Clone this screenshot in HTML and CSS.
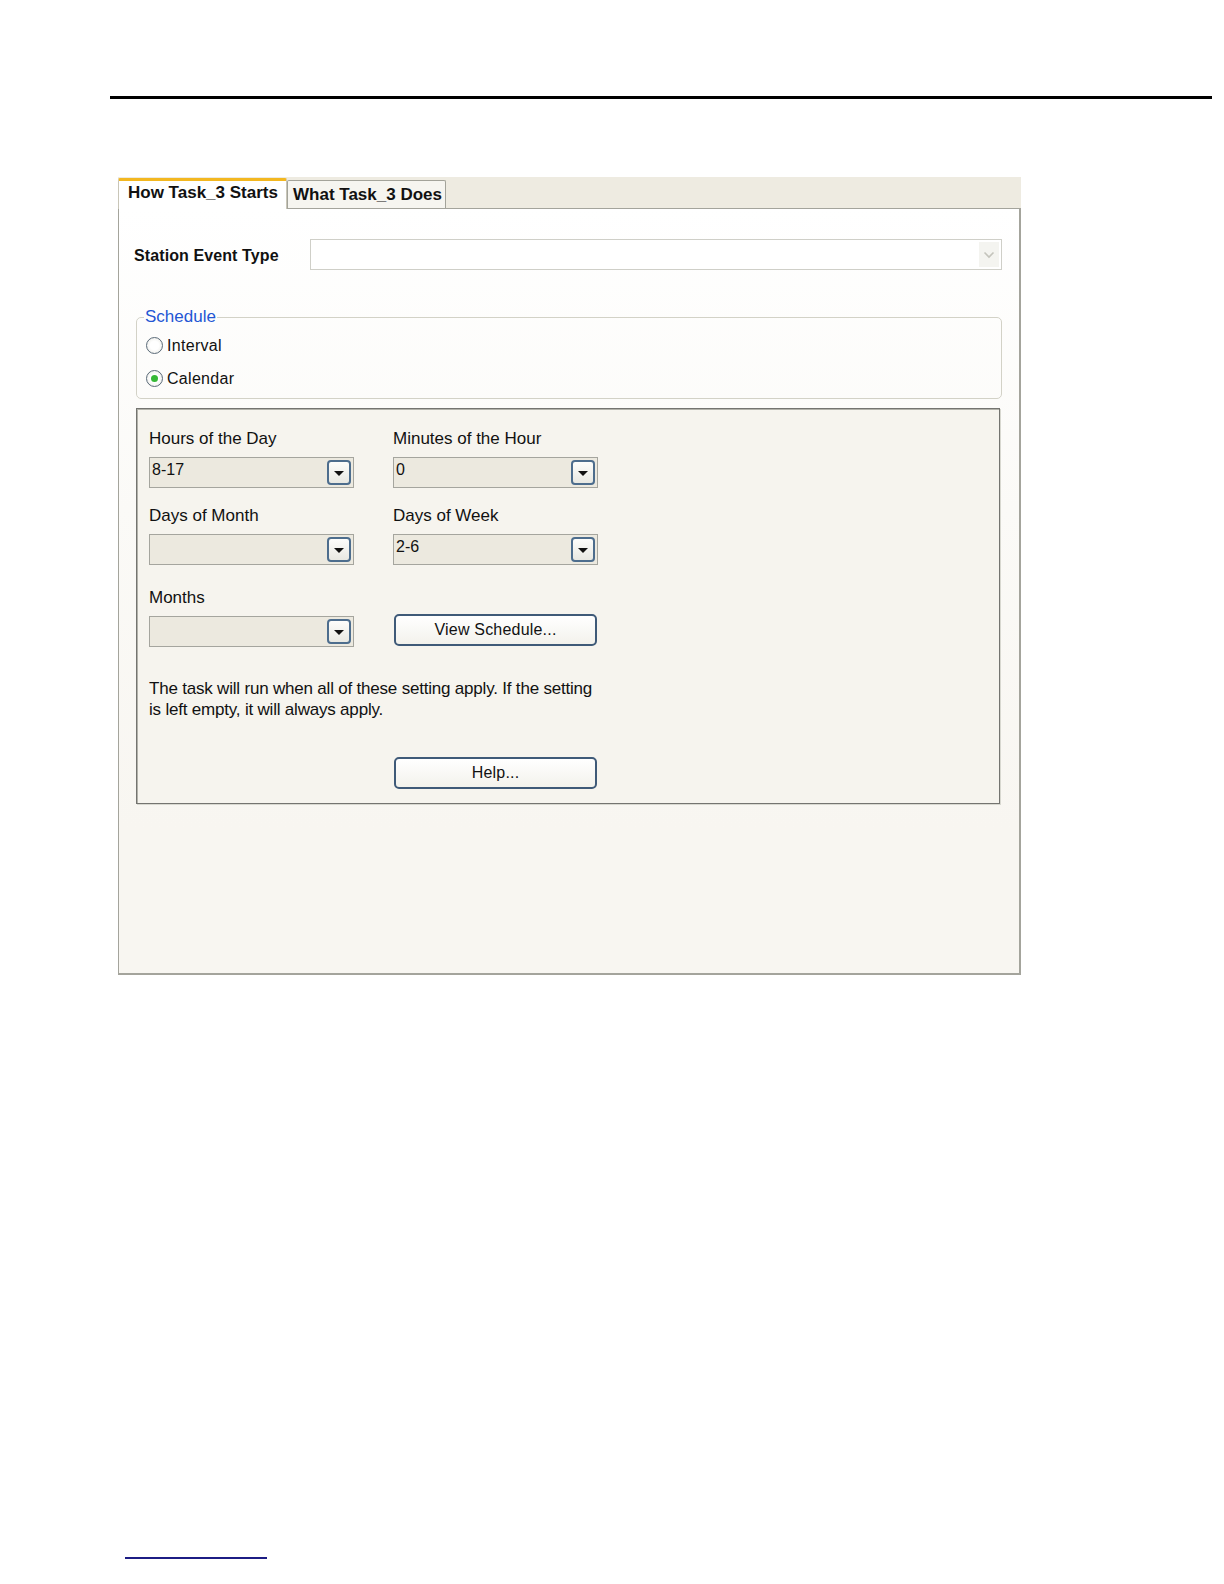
FILE: index.html
```html
<!DOCTYPE html>
<html lang="en">
<head>
  <meta charset="UTF-8" />
  <title>Task_3 Schedule</title>
  <link rel="stylesheet" href="styles.css">
</head>
<body>
  <div class="rule-top"></div>

  <div class="window">
    <div class="tabs">
      <div class="tab active">How Task_3 Starts</div>
      <div class="tab">What Task_3 Does</div>
    </div>

    <div class="panel">
      <div class="event-row">
        <span class="event-label">Station Event Type</span>
        <div class="event-select">
          <span class="event-arrow">
            <svg width="12" height="8" viewBox="0 0 12 8"><path d="M1.5 1.5 L6 6 L10.5 1.5" fill="none" stroke="#c4c4bc" stroke-width="1.6"/></svg>
          </span>
        </div>
      </div>

      <fieldset class="schedule">
        <legend>Schedule</legend>
        <label class="radio"><span class="dot"></span>Interval</label>
        <label class="radio checked"><span class="dot"></span>Calendar</label>
      </fieldset>

      <div class="calendar">
        <div class="cal-grid">
          <div class="field">
            <div class="field-label">Hours of the Day</div>
            <div class="combo"><span class="combo-val">8-17</span><span class="combo-btn"></span></div>
          </div>
          <div class="field">
            <div class="field-label">Minutes of the Hour</div>
            <div class="combo"><span class="combo-val">0</span><span class="combo-btn"></span></div>
          </div>
          <div class="field">
            <div class="field-label">Days of Month</div>
            <div class="combo"><span class="combo-val"></span><span class="combo-btn"></span></div>
          </div>
          <div class="field">
            <div class="field-label">Days of Week</div>
            <div class="combo"><span class="combo-val">2-6</span><span class="combo-btn"></span></div>
          </div>
          <div class="field months">
            <div class="field-label">Months</div>
            <div class="combo"><span class="combo-val"></span><span class="combo-btn"></span></div>
          </div>
          <div class="field months button-cell">
            <button class="btn">View Schedule...</button>
          </div>
        </div>

        <p class="note">The task will run when all of these setting apply. If the setting is left empty, it will always apply.</p>

        <div class="help-row">
          <button class="btn">Help...</button>
        </div>
      </div>
    </div>
  </div>

  <div class="rule-foot"></div>
</body>
</html>
```

FILE: styles.css
```css
html, body {
  margin: 0;
  background: #fff;
}
body {
  font-family: "Liberation Sans", Arial, sans-serif;
  color: #111;
  padding-top: 96px;
}
.rule-top {
  height: 3px;
  background: #000;
  margin: 0 12px 0 110px;
}
.window {
  margin: 78px 0 0 118px;
  width: 903px;
}
.tabs {
  display: flex;
  align-items: flex-end;
  height: 31px;
  background: #eeebe1;
}
.tab {
  box-sizing: border-box;
  height: 28px;
  width: 159px;
  padding: 4px 0 0 5px;
  border: 1px solid #a3a39a;
  border-bottom: none;
  background: #f6f5f0;
  font-weight: bold;
  font-size: 17px;
  border-radius: 2px 2px 0 0;
}
.tab.active {
  height: 31px;
  width: 169px;
  padding: 2px 0 0 9px;
  border: 1px solid #c9c6b8;
  border-top: 3px solid #f3b720;
  border-bottom: none;
  background: #fff;
  margin-bottom: -1px;
  position: relative;
}
.panel {
  box-sizing: border-box;
  height: 767px;
  border: 1px solid #a4a49c;
  border-right: 2px solid #a4a49c;
  border-bottom: 2px solid #a4a49c;
  background: linear-gradient(#fff 0, #fbfaf7 300px, #f8f6f1 620px);
  padding-top: 30px;
}
.event-row {
  display: flex;
  align-items: center;
  padding: 0 17px 0 15px;
}
.event-label {
  font-weight: bold;
  font-size: 16px;
  letter-spacing: 0.1px;
  width: 176px;
  margin-top: 3px;
}
.event-select {
  flex: 1;
  height: 31px;
  box-sizing: border-box;
  border: 1px solid #cfcfc8;
  background: #fff;
  display: flex;
  justify-content: flex-end;
  align-items: center;
  padding-right: 2px;
}
.event-arrow {
  width: 20px;
  height: 25px;
  background: #f4f4f0;
  display: flex;
  align-items: center;
  justify-content: center;
}
.schedule {
  margin: 38px 17px 0 17px;
  padding: 3px 10px 3px 9px;
  border: 1px solid #d3d2c7;
  border-radius: 5px;
}
.schedule legend {
  color: #2356d4;
  font-size: 17px;
  padding: 0 1px;
  margin-left: -2px;
  line-height: 18px;
}
.radio {
  display: flex;
  align-items: center;
  font-size: 16px;
  height: 33px;
  letter-spacing: 0.3px;
}
.dot {
  box-sizing: border-box;
  width: 17px;
  height: 17px;
  border: 1px solid #5a6a78;
  border-radius: 50%;
  background: radial-gradient(#fff 40%, #e6e6e0);
  margin-right: 4px;
  display: flex;
  align-items: center;
  justify-content: center;
}
.radio.checked .dot::after {
  content: "";
  width: 7px;
  height: 7px;
  border-radius: 50%;
  background: #36b836;
}
.calendar {
  box-sizing: border-box;
  margin: 9px 19px 0 17px;
  height: 396px;
  border: 1px solid #747470;
  box-shadow: inset 1px 1px 0 #b2b2aa, 1px 1px 0 #d8d8d0;
  background: #f6f4ee;
  padding: 20px 0 0 12px;
}
.cal-grid {
  display: grid;
  grid-template-columns: 205px 205px;
  column-gap: 39px;
  row-gap: 18px;
}
.field.months {
  margin-top: 5px;
}
.field-label {
  font-size: 17px;
  line-height: 20px;
  height: 20px;
  margin-bottom: 8px;
}
.combo {
  box-sizing: border-box;
  height: 31px;
  border: 1px solid #a5a59e;
  background: #ece9df;
  display: flex;
  align-items: center;
  justify-content: space-between;
  padding: 0 2px;
}
.combo-val {
  font-size: 16px;
  align-self: flex-start;
  margin-top: 3px;
}
.combo-btn {
  box-sizing: border-box;
  width: 24px;
  height: 25px;
  border: 2px solid #4d6d8d;
  border-radius: 4px;
  background: linear-gradient(#fdfdfb, #e8e8e2);
  display: flex;
  align-items: center;
  justify-content: center;
}
.combo-btn::after {
  content: "";
  border-left: 5px solid transparent;
  border-right: 5px solid transparent;
  border-top: 5px solid #111;
  margin-top: 2px;
}
.button-cell {
  display: flex;
  align-items: flex-end;
  padding-bottom: 1px;
}
.btn {
  box-sizing: border-box;
  width: 203px;
  height: 32px;
  margin-left: 1px;
  border: 2px solid #3f5a78;
  border-radius: 5px;
  background: linear-gradient(#fff, #f3f2ec);
  font-family: "Liberation Sans", Arial, sans-serif;
  font-size: 16px;
  color: #111;
  letter-spacing: 0.2px;
}
.note {
  margin: 31px 0 0 0;
  width: 446px;
  font-size: 17px;
  line-height: 21px;
  letter-spacing: -0.2px;
}
.help-row {
  margin: 37px 0 0 244px;
}
.rule-foot {
  height: 2px;
  background: #1c1c84;
  width: 142px;
  margin: 582px 0 0 125px;
}
```
